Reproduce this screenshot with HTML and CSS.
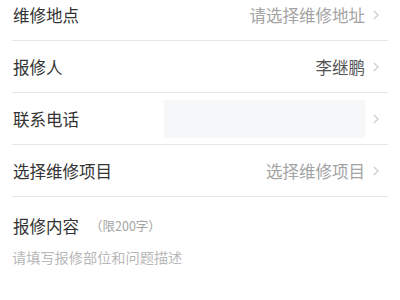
FILE: index.html
```html
<!DOCTYPE html>
<html lang="zh">
<head>
<meta charset="utf-8">
<link rel="stylesheet" href="styles.css">
</head>
<body>
<div class="form">
  <div class="row">
    <span class="label">维修地点</span>
    <span class="value placeholder">请选择维修地址</span>
    <svg class="chev" viewBox="0 0 6 10" width="6" height="10"><path d="M0.8 0.8 L5 5 L0.8 9.2" fill="none" stroke="#c8c8c8" stroke-width="1.1"/></svg>
  </div>
  <div class="row">
    <span class="label">报修人</span>
    <span class="value filled">李继鹏</span>
    <svg class="chev" viewBox="0 0 6 10" width="6" height="10"><path d="M0.8 0.8 L5 5 L0.8 9.2" fill="none" stroke="#c8c8c8" stroke-width="1.1"/></svg>
  </div>
  <div class="row">
    <span class="label">联系电话</span>
    <div class="input"></div>
    <svg class="chev" viewBox="0 0 6 10" width="6" height="10"><path d="M0.8 0.8 L5 5 L0.8 9.2" fill="none" stroke="#c8c8c8" stroke-width="1.1"/></svg>
  </div>
  <div class="row">
    <span class="label">选择维修项目</span>
    <span class="value placeholder">选择维修项目</span>
    <svg class="chev" viewBox="0 0 6 10" width="6" height="10"><path d="M0.8 0.8 L5 5 L0.8 9.2" fill="none" stroke="#c8c8c8" stroke-width="1.1"/></svg>
  </div>
  <div class="content">
    <div class="content-head">
      <span class="label">报修内容</span>
      <span class="limit">（限200字）</span>
    </div>
    <div class="textarea">请填写报修部位和问题描述</div>
  </div>
</div>
</body>
</html>
```
FILE: styles.css
```css
html, body {
  margin: 0;
  padding: 0;
  background: #ffffff;
}
body {
  font-family: "Noto Sans CJK SC", "Noto Sans", sans-serif;
  width: 400px;
  height: 300px;
  overflow: hidden;
}
.form {
  margin: -11px 12px 0 12px;
}
.row {
  height: 51px;
  border-bottom: 1px solid #e6e6e6;
  display: flex;
  align-items: center;
}
.label {
  font-size: 16.5px;
  color: #333333;
  padding-left: 1px;
  line-height: 24px;
}
.value {
  margin-left: auto;
  font-size: 16.5px;
  line-height: 24px;
}
.placeholder {
  color: #a3a3a3;
}
.filled {
  color: #555555;
}
.chev {
  margin-left: 8px;
  margin-right: 9px;
  flex: none;
}
.input {
  margin-left: auto;
  width: 201px;
  height: 38px;
  background: #f6f7f9;
}
.content-head {
  display: flex;
  align-items: center;
  padding-top: 17px;
}
.limit {
  font-size: 12.5px;
  color: #a3a3a3;
  margin-left: 11px;
  line-height: 20px;
}
.textarea {
  margin-top: 8px;
  font-size: 14.2px;
  color: #b8b8b8;
  line-height: 22px;
}
```
